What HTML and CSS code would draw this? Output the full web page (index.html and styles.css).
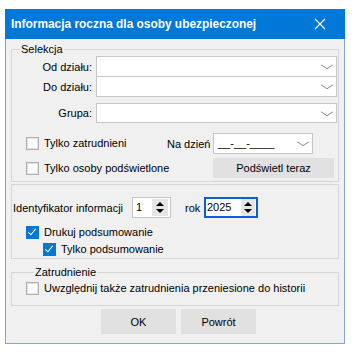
FILE: index.html
```html
<!DOCTYPE html>
<html lang="pl">
<head>
  <meta charset="UTF-8" />
  <title>Informacja roczna dla osoby ubezpieczonej</title>
  <link rel="stylesheet" href="styles.css">
</head>
<body>

  <div class="okno">
    <!-- Pasek tytułu -->
    <div class="tytul">
      <span>Informacja roczna dla osoby ubezpieczonej</span>
      <svg class="zamknij" width="12" height="12" viewBox="0 0 12 12">
        <path d="M1 1 L11 11 M11 1 L1 11" stroke="#fff" stroke-width="1.2" fill="none" />
      </svg>
    </div>

    <div class="tresc">
      <!-- Selekcja -->
      <fieldset class="grupa">
        <legend>Selekcja</legend>

        <div class="pole pole-od">
          <label>Od działu:</label>
          <div class="combo"><span class="strzalka"></span></div>
        </div>
        <div class="pole pole-do">
          <label>Do działu:</label>
          <div class="combo"><span class="strzalka"></span></div>
        </div>
        <div class="pole pole-grupa">
          <label>Grupa:</label>
          <div class="combo combo-niski"><span class="strzalka"></span></div>
        </div>

        <div class="opcje">
          <div class="check"><span class="box"></span>Tylko zatrudnieni</div>
          <div class="na-dzien">Na dzień</div>
          <div class="combo data">__-__-____<span class="strzalka"></span></div>
          <div class="check szeroki"><span class="box"></span>Tylko osoby podświetlone</div>
          <button class="przycisk podswietl">Podświetl teraz</button>
        </div>
      </fieldset>

      <!-- Identyfikator -->
      <fieldset class="grupa grupa-id">
        <div class="wiersz-id">
          <span class="etykieta-id">Identyfikator informacji</span>
          <div class="spin spin-id">1<span class="strzalki"><i class="gora"></i><i class="dol"></i></span></div>
          <span class="rok">rok</span>
          <div class="spin spin-rok">2025<span class="strzalki"><i class="gora"></i><i class="dol"></i></span></div>
        </div>
        <div class="check zaznaczony"><span class="box"></span>Drukuj podsumowanie</div>
        <div class="check zaznaczony wciety"><span class="box"></span>Tylko podsumowanie</div>
      </fieldset>

      <!-- Zatrudnienie -->
      <fieldset class="grupa grupa-zatr">
        <legend>Zatrudnienie</legend>
        <div class="check"><span class="box"></span>Uwzględnij także zatrudnienia przeniesione do historii</div>
      </fieldset>

      <div class="przyciski">
        <button class="przycisk">OK</button>
        <button class="przycisk">Powrót</button>
      </div>
    </div>
  </div>

</body>
</html>
```

FILE: styles.css
```css
body {
  margin: 0;
  padding: 0;
  background: #ffffff;
  font-family: "Liberation Sans", Arial, sans-serif;
  font-size: 11px;
  color: #000;
}

.okno {
  margin: 9px 0 0 5px;
  width: 338px;
  background: #f0f0f0;
  border: 1px solid #86a5d4;
  border-top: none;
}

/* Pasek tytułu */
.tytul {
  margin: 0 -1px;
  height: 30px;
  background: #0078d7;
  color: #fff;
  font-weight: bold;
  font-size: 11.9px;
  display: flex;
  align-items: center;
  padding-left: 6px;
}

.tytul span {
  flex: 1;
}

.zamknij {
  margin-right: 19px;
}

.tresc {
  padding: 3px 5px 9px 5px;
}

/* Ramki grup */
.grupa {
  margin: 0;
  padding: 0;
  border: 1px solid #d5d5d5;
}

.grupa legend {
  margin-left: 8px;
  padding: 0 1px;
  line-height: 14px;
}

.pole {
  display: flex;
  align-items: center;
  margin-right: 1px;
}

.pole label {
  width: 80px;
  text-align: right;
  margin-right: 4px;
}

.pole-do {
  margin-top: -1px;
}

.pole-grupa {
  margin-top: 6px;
}

.combo {
  flex: 1;
  height: 19px;
  background: #fff;
  border: 1px solid #c6c6c6;
  position: relative;
}

.combo-niski {
  height: 18px;
}

.strzalka {
  position: absolute;
  right: 5px;
  top: 4px;
  width: 7px;
  height: 7px;
  border-right: 1px solid #8a8a8a;
  border-bottom: 1px solid #8a8a8a;
  transform: scale(1.1, 0.75) rotate(45deg);
}

/* Opcje w selekcji */
.opcje {
  display: grid;
  grid-template-columns: 141px 46px 121px;
  align-items: center;
  margin: 10px 0 3px 14px;
  row-gap: 4px;
}

.check {
  display: flex;
  align-items: center;
  line-height: 15px;
}

.box {
  width: 11px;
  height: 11px;
  background: #fff;
  border: 1px solid #b0b0b0;
  box-shadow: inset 0 0 0 1px #e2e2e2;
  margin-right: 5px;
  flex: none;
  position: relative;
}

.zaznaczony .box {
  background: #0078d7;
  border-color: #0078d7;
  box-shadow: none;
}

.zaznaczony .box::after {
  content: "";
  position: absolute;
  left: 3px;
  top: 0px;
  width: 3px;
  height: 7px;
  border-right: 1.5px solid #fff;
  border-bottom: 1.5px solid #fff;
  transform: rotate(40deg);
}

.szeroki {
  grid-column: 1 / 3;
}

.data {
  flex: none;
  line-height: 19px;
  padding-left: 4px;
  box-sizing: border-box;
  width: 100px;
  height: 21px;
}

.przycisk {
  font-family: inherit;
  font-size: inherit;
  color: #000;
  background: #e1e1e1;
  border: 1px solid #e1e1e1;
  padding: 0;
}

.podswietl {
  height: 20px;
  width: 121px;
}

/* Identyfikator informacji */
.grupa-id {
  margin-top: 2px;
  padding: 12px 0 1px 1px;
}

.wiersz-id {
  display: flex;
  align-items: center;
  margin-bottom: 7px;
}

.etykieta-id {
  width: 119px;
}

.spin {
  position: relative;
  height: 19px;
  line-height: 19px;
  background: #fff;
  border: 1px solid #c6c6c6;
  padding-left: 3px;
  box-sizing: content-box;
}

.spin-id {
  width: 34px;
}

.rok {
  width: 19px;
  margin-left: 14px;
}

.spin-rok {
  width: 49px;
  height: 17px;
  line-height: 17px;
  border: 2px solid #0a5fd6;
  padding-left: 1px;
}

.strzalki {
  position: absolute;
  top: 1px;
  bottom: 1px;
  right: 2px;
  width: 16px;
  background: #e6e6e6;
  display: flex;
  flex-direction: column;
  justify-content: center;
  align-items: center;
  gap: 3px;
}

.spin-rok .strzalki {
  top: 0;
  bottom: 0;
  right: 1px;
  width: 14px;
}

.strzalki i {
  width: 0;
  height: 0;
  border-left: 4px solid transparent;
  border-right: 4px solid transparent;
}

.strzalki .gora {
  border-bottom: 4px solid #000;
}

.strzalki .dol {
  border-top: 4px solid #000;
}

.grupa-id .check {
  margin-left: 13px;
}

.grupa-id .wciety {
  margin-left: 30px;
  margin-top: 2px;
  margin-bottom: 0;
}

/* Zatrudnienie */
.grupa-zatr {
  margin-top: 6px;
  padding: 2px 0 9px 14px;
}

.przyciski {
  display: flex;
  justify-content: center;
  gap: 5px;
  padding-left: 7px;
  margin-top: 3px;
}

.przyciski .przycisk {
  width: 75px;
  height: 25px;
}
```
